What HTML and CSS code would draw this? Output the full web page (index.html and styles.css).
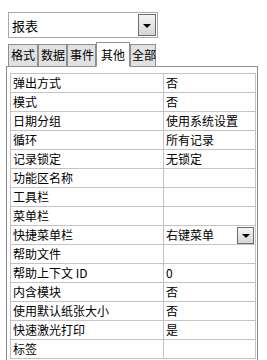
FILE: index.html
```html
<!doctype html>
<html lang="zh">
  <head>
    <meta charset="UTF-8" />
    <title>属性表</title>
    <link rel="stylesheet" href="styles.css">
  </head>
  <body>
    <div class="combo">
      <span class="combo-text">报表</span>
      <span class="drop-btn"><i class="arrow"></i></span>
    </div>

    <div class="tabs">
      <span class="tab-gap"></span>
      <span class="tab w30">格式</span>
      <span class="tab w29">数据</span>
      <span class="tab w29">事件</span>
      <span class="tab active">其他</span>
      <span class="tab w26">全部</span>
      <span class="tab-fill"></span>
    </div>

    <div class="panel">
      <table class="props">
        <tr><td class="name">弹出方式</td><td>否</td></tr>
        <tr><td class="name">模式</td><td>否</td></tr>
        <tr><td class="name">日期分组</td><td>使用系统设置</td></tr>
        <tr><td class="name">循环</td><td>所有记录</td></tr>
        <tr><td class="name">记录锁定</td><td>无锁定</td></tr>
        <tr><td class="name">功能区名称</td><td></td></tr>
        <tr><td class="name">工具栏</td><td></td></tr>
        <tr><td class="name">菜单栏</td><td></td></tr>
        <tr>
          <td class="name">快捷菜单栏</td>
          <td>
            <div class="cell-combo">
              <span>右键菜单</span>
              <span class="drop-btn small"><i class="arrow"></i></span>
            </div>
          </td>
        </tr>
        <tr><td class="name">帮助文件</td><td></td></tr>
        <tr><td class="name">帮助上下文 ID</td><td>0</td></tr>
        <tr><td class="name">内含模块</td><td>否</td></tr>
        <tr><td class="name">使用默认纸张大小</td><td>否</td></tr>
        <tr><td class="name">快速激光打印</td><td>是</td></tr>
        <tr><td class="name">标签</td><td></td></tr>
      </table>
    </div>
  </body>
</html>
```

FILE: styles.css
```css
body {
  margin: 0;
  background: #fff;
  color: #000;
  font-family: "Noto Sans CJK SC", "DejaVu Sans", sans-serif;
  font-size: 12px;
}

.combo {
  box-sizing: border-box;
  margin: 12px 0 0 8px;
  width: 150px;
  height: 26px;
  border: 1px solid #a9a9a9;
  display: flex;
  align-items: center;
  justify-content: space-between;
  padding: 0 1px 0 3px;
}

.combo-text {
  font-size: 13px;
  line-height: 1;
}

.drop-btn {
  box-sizing: border-box;
  width: 18px;
  height: 22px;
  border: 1px solid #6d6d6d;
  background: linear-gradient(#f4f4f4, #d6d6d6);
  display: flex;
  align-items: center;
  justify-content: center;
}

.drop-btn.small {
  width: 17px;
  height: 17px;
}

.arrow {
  width: 0;
  height: 0;
  border-left: 4px solid transparent;
  border-right: 4px solid transparent;
  border-top: 4px solid #000;
  margin-top: 1px;
}

.tabs {
  display: flex;
  align-items: flex-end;
  margin: 4px 0 0 6px;
  width: 252px;
  height: 25px;
}

.tab-gap,
.tab-fill {
  box-sizing: border-box;
  border-bottom: 1px solid #8e8e96;
  height: 1px;
}

.tab-gap {
  width: 2px;
}

.tab-fill {
  flex: 1;
}

.tab {
  box-sizing: border-box;
  height: 23px;
  border: 1px solid #8e8e96;
  background: #e1e1e1;
  padding: 0 0 0 2px;
  line-height: 20px;
  font-size: 12px;
  white-space: nowrap;
}

.w30 { width: 30px; }
.w29 { width: 29px; }
.w26 { width: 26px; padding-left: 1px; }

.tab.active {
  width: 34px;
  height: 25px;
  background: #fff;
  border-bottom-color: #fff;
  padding-left: 4px;
  line-height: 23px;
}

.panel {
  box-sizing: border-box;
  margin-left: 6px;
  width: 252px;
  border: 1px solid #8e8e96;
  border-top: none;
  padding: 6px 1px 4px 3px;
}

.props {
  width: 100%;
  border-collapse: collapse;
  table-layout: fixed;
}

.props td {
  border: 1px solid #c3c3c3;
  height: 18px;
  padding: 0 0 0 2px;
  line-height: 18px;
  white-space: nowrap;
  overflow: hidden;
}

.props td.name {
  width: 150px;
}

.cell-combo {
  display: flex;
  align-items: center;
  justify-content: space-between;
  padding-right: 1px;
}
```
